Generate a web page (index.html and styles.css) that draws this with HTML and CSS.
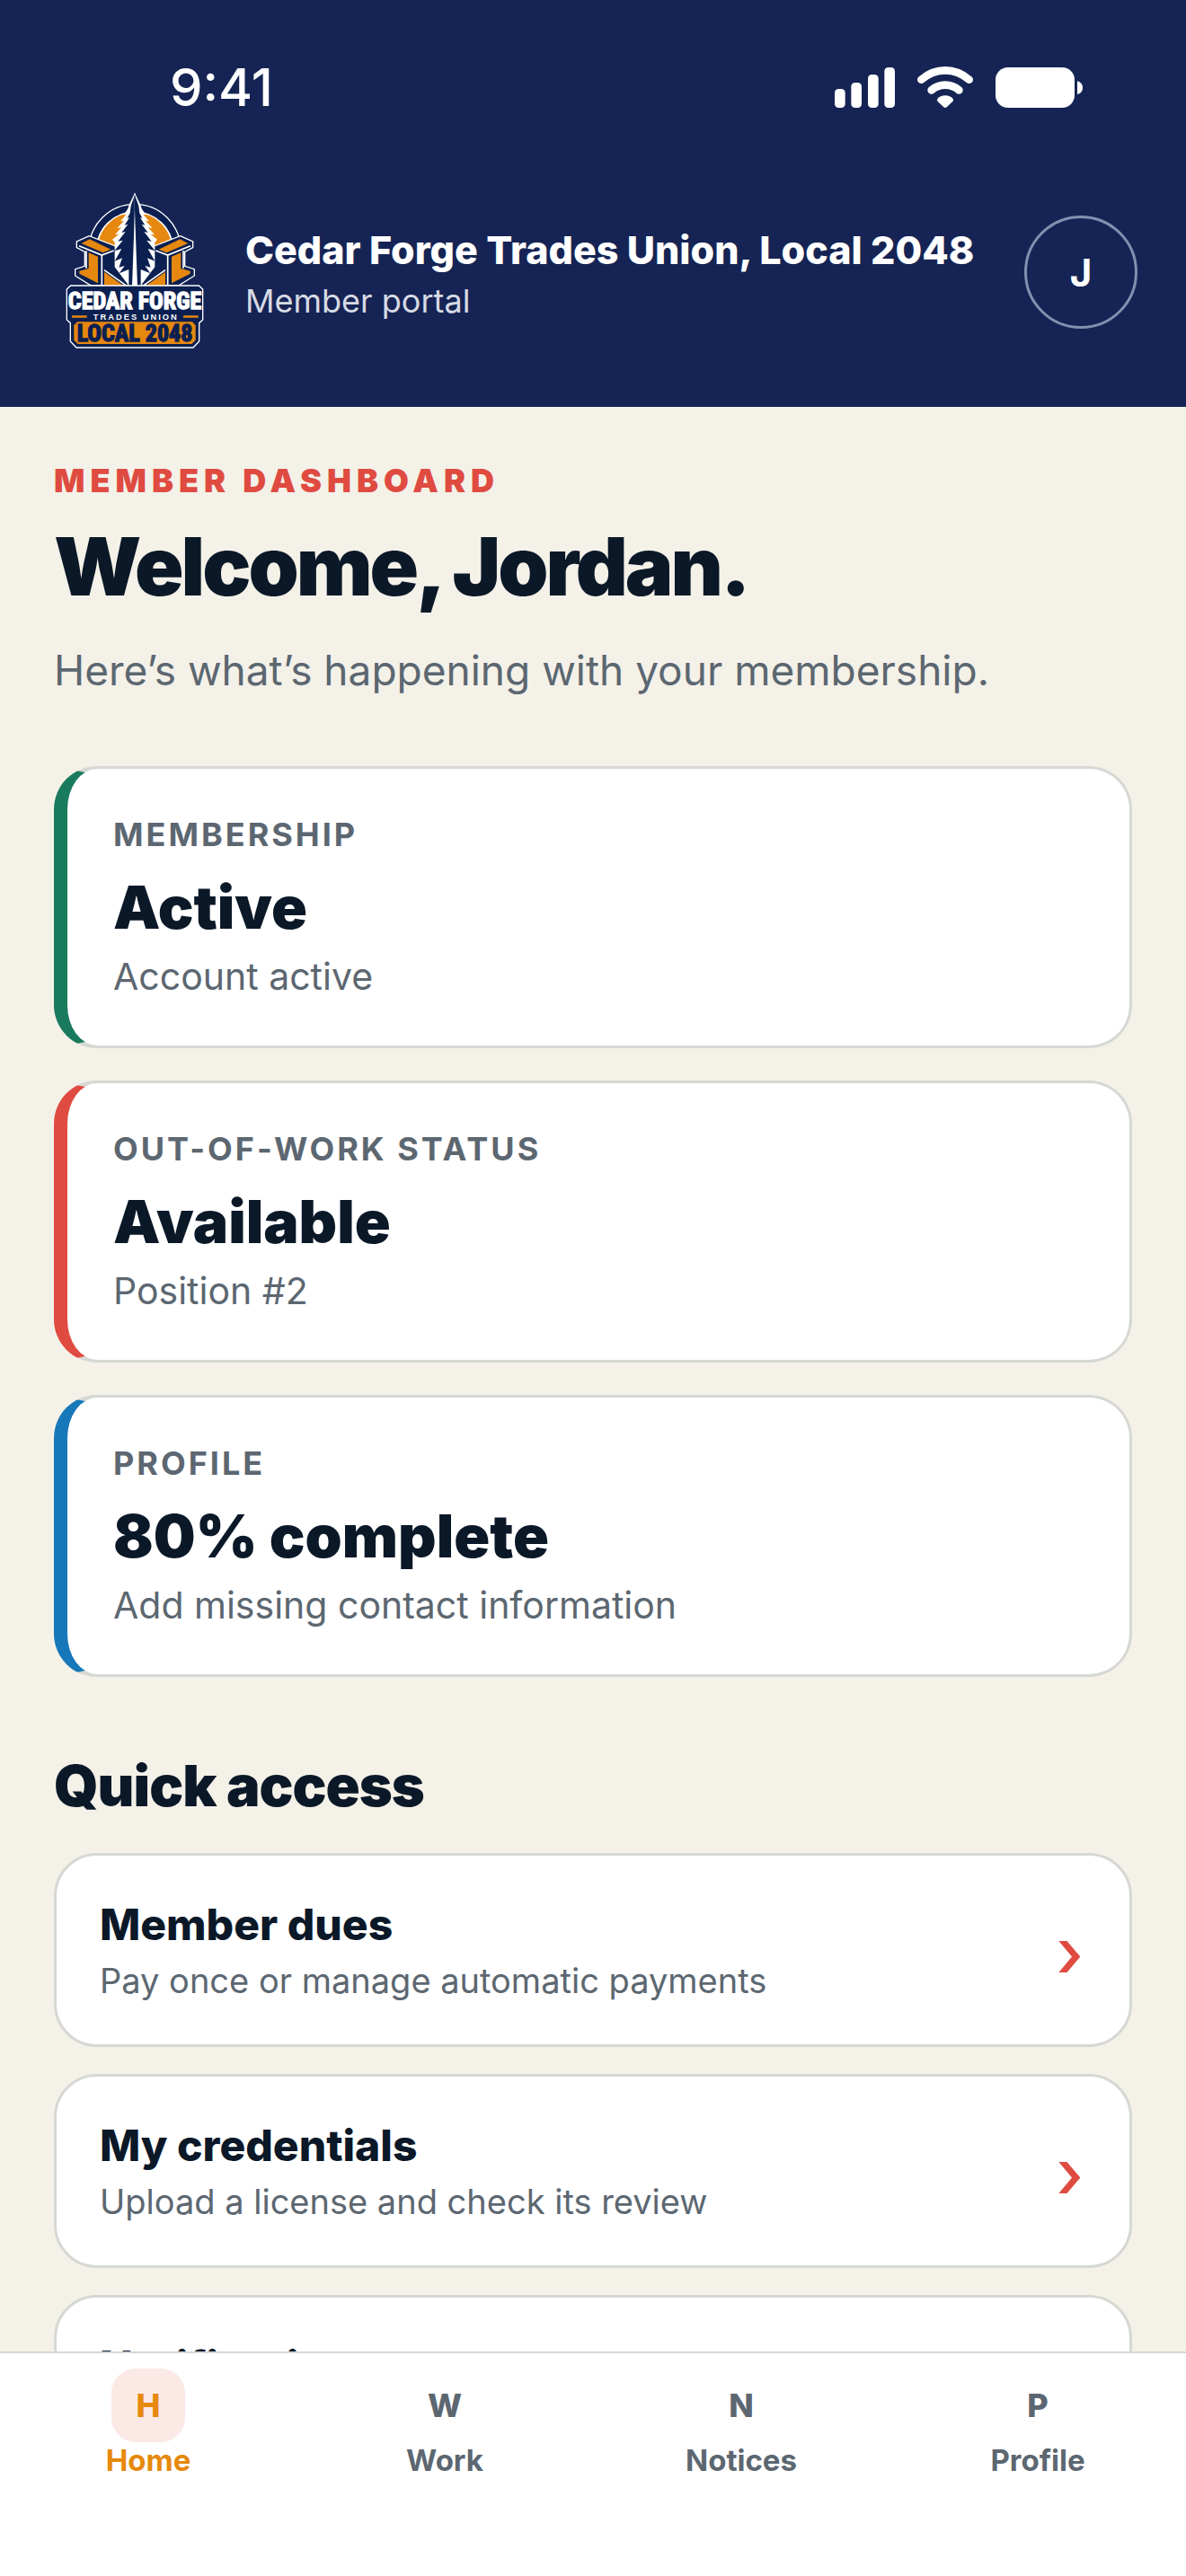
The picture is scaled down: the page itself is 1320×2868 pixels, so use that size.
FILE: index.html
```html
<!DOCTYPE html>
<html lang="en">
<head>
    <meta charset="UTF-8">
    <meta name="viewport" content="width=device-width, initial-scale=1.0">
    <title>Member Dashboard</title>
    <link rel="stylesheet" href="styles.css">
</head>
<body>
    <header class="header">
        <div class="status-bar">
            <span class="status-time">9:41</span>
            <div class="status-icons">
                <svg width="67" height="45" viewBox="0 0 201 135" fill="#fff">
                    <rect x="0" y="72" width="35" height="63" rx="13"/>
                    <rect x="55" y="51" width="35" height="84" rx="13"/>
                    <rect x="111" y="24" width="35" height="111" rx="13"/>
                    <rect x="166" y="0" width="35" height="135" rx="13"/>
                </svg>
                <svg width="62" height="46" viewBox="0 0 186 138" fill="none" stroke="#fff" stroke-width="26" stroke-linecap="round">
                    <path d="M13 44Q49 13 93 13T173 44"/>
                    <path d="M47 79Q67 62 93 62T139 79"/>
                    <path d="M93 97C104 97 113 101 118 107C121 111 120 115 117 118L98 136Q93 140 88 136L69 118C66 115 65 111 68 107C73 101 82 97 93 97Z" fill="#fff" stroke="none"/>
                </svg>
                <svg width="97" height="45" viewBox="0 0 291 135" fill="#fff">
                    <rect width="264" height="135" rx="42"/>
                    <path d="M273 46C285 49 291 58 291 68S285 87 273 90Z"/>
                </svg>
            </div>
        </div>
        <div class="brand-bar">
            <svg class="logo" viewBox="-18 39 540 540" role="img" aria-label="Cedar Forge Trades Union">
                <!-- sun disc -->
                <circle cx="270" cy="235" r="153" fill="#0b2050" stroke="#fff" stroke-width="4"/>
                <circle cx="270" cy="235" r="127" fill="#e6870f" stroke="#fff" stroke-width="5"/>
                <!-- beams, right one is the left one mirrored -->
                <g id="beam">
                    <path d="M118 188L76 207V227L103 241V289L71 299V321L122 353H262V300L205 222Z" fill="#0b2050" stroke="#fff" stroke-width="4"/>
                    <path d="M92 213L119 199L190 233L164 244Z" fill="#e6870f"/>
                    <path d="M84 221L160 252L200 237" fill="none" stroke="#fff" stroke-width="5"/>
                    <path d="M116 244L147 257V346L85 314V305L116 297Z" fill="#e6870f"/>
                    <path d="M108 238V296M160 252V353M168 302L240 353" fill="none" stroke="#fff" stroke-width="5"/>
                    <path d="M168 308L232 354H168Z" fill="#e6870f"/>
                </g>
                <use href="#beam" transform="matrix(-1 0 0 1 540 0)"/>
                <!-- tree, drawn as two mirrored halves -->
                <g id="tree">
                    <path d="M271 44H270L251 84L247 97L233 118L242 116L222 139L234 137L211 162L225 160L204 184L217 182L195 200L203 210V292L250 354H271Z" fill="#fff"/>
                    <path d="M271 51H270L257 88L254 112L245 128L252 127L236 152L247 149L226 177L239 174L214 206L230 203L202 238L226 231L203 272L228 262L217 293L236 288L218 313L250 300V354H271Z" fill="#0b2050"/>
                </g>
                <use href="#tree" transform="matrix(-1 0 0 1 540 0)"/>
                <path d="M270 105L261 358H279Z" fill="#fff"/>
                <!-- name plate -->
                <path d="M56 354H484L497 366V468L485 479V540L465 561H75L55 540V479L43 468V366Z" fill="#0b2050" stroke="#fff" stroke-width="4"/>
                <path d="M60 454H110V461H60ZM432 454H482V461H432Z" fill="#e6870f"/>
                <path d="M78 475H462L473 487V536L460 549H80L67 536V487Z" fill="#e6870f"/>
                <text class="logo-name" x="270" y="432">CEDAR FORGE</text>
                <text class="logo-trade" x="274" y="467">TRADES UNION</text>
                <text class="logo-local" x="270" y="540">LOCAL 2048</text>
            </svg>
            <div class="brand-text">
                <strong class="brand-name">Cedar Forge Trades Union, Local 2048</strong>
                <span class="brand-sub">Member portal</span>
            </div>
            <button class="avatar" type="button" aria-label="Account">J</button>
        </div>
    </header>

    <main class="content">
        <p class="eyebrow">MEMBER DASHBOARD</p>
        <h1>Welcome, Jordan.</h1>
        <p class="intro">Here’s what’s happening with your membership.</p>

        <section class="cards">
            <article class="card card-green">
                <span class="card-label">MEMBERSHIP</span>
                <strong class="card-value">Active</strong>
                <span class="card-note">Account active</span>
            </article>
            <article class="card card-red">
                <span class="card-label">OUT-OF-WORK STATUS</span>
                <strong class="card-value">Available</strong>
                <span class="card-note">Position #2</span>
            </article>
            <article class="card card-blue">
                <span class="card-label">PROFILE</span>
                <strong class="card-value">80% complete</strong>
                <span class="card-note">Add missing contact information</span>
            </article>
        </section>

        <h2>Quick access</h2>
        <nav class="links" aria-label="Quick access">
            <a class="link-row" href="#dues">
                <span class="link-text">
                    <strong>Member dues</strong>
                    <small>Pay once or manage automatic payments</small>
                </span>
                <span class="chevron">›</span>
            </a>
            <a class="link-row" href="#credentials">
                <span class="link-text">
                    <strong>My credentials</strong>
                    <small>Upload a license and check its review</small>
                </span>
                <span class="chevron">›</span>
            </a>
            <a class="link-row" href="#notifications">
                <span class="link-text">
                    <strong>Notifications</strong>
                </span>
            </a>
        </nav>
    </main>

    <nav class="tab-bar" aria-label="Main">
        <a class="tab active" href="#home"><span class="tab-icon">H</span>Home</a>
        <a class="tab" href="#work"><span class="tab-icon">W</span>Work</a>
        <a class="tab" href="#notices"><span class="tab-icon">N</span>Notices</a>
        <a class="tab" href="#profile"><span class="tab-icon">P</span>Profile</a>
    </nav>
</body>
</html>
```

FILE: styles.css
```css
* {
    box-sizing: border-box;
}
body {
    font-family: Inter, 'Liberation Sans', sans-serif;
    background: #f4f1e8;
    color: #0b1828;
    display: flex;
    flex-direction: column;
    height: 100vh;
    margin: 0;
}
h1, h2, p {
    margin: 0;
}
a {
    color: inherit;
    text-decoration: none;
}

/* header */
.header {
    background: #152454;
    color: white;
    flex: none;
}
.status-bar {
    display: flex;
    justify-content: space-between;
    align-items: center;
    height: 194px;
    padding: 0 115px 0 189px;
}
.status-time {
    font-size: 58px;
    font-weight: 500;
}
.status-icons {
    display: flex;
    align-items: center;
    gap: 25px;
}
.brand-bar {
    display: flex;
    align-items: center;
    gap: 39px;
    padding: 19px 54px 60px;
}
.logo {
    width: 180px;
    height: 180px;
    flex: none;
}
.logo text {
    font-family: 'Liberation Sans Narrow', 'Roboto Condensed', 'DejaVu Sans Condensed', sans-serif;
    font-weight: bold;
    text-anchor: middle;
}
.logo .logo-name {
    font-size: 78px;
    fill: white;
    stroke: white;
    stroke-width: 4px;
}
.logo .logo-trade {
    font-family: 'Liberation Sans', sans-serif;
    font-size: 28px;
    letter-spacing: 6px;
    fill: white;
}
.logo .logo-local {
    font-size: 78px;
    fill: #0b2050;
    stroke: #0b2050;
    stroke-width: 4px;
}
.brand-text {
    display: flex;
    flex-direction: column;
    gap: 7px;
    flex: 1;
    min-width: 0;
    white-space: nowrap;
}
.brand-name {
    font-size: 43px;
    font-weight: 800;
    line-height: 56px;
}
.brand-sub {
    font-size: 36px;
    line-height: 44px;
    color: #d7dae4;
}
.avatar {
    width: 126px;
    height: 126px;
    flex: none;
    padding: 0;
    border: 3px solid #8390b0;
    border-radius: 50%;
    background: transparent;
    color: white;
    font-family: inherit;
    font-size: 42px;
    font-weight: 700;
    cursor: pointer;
}

/* content */
.content {
    flex: 1;
    min-height: 0;
    overflow-y: auto;
    scrollbar-width: none;
    padding: 60px 60px 36px;
}
.eyebrow {
    font-size: 36px;
    font-weight: 900;
    line-height: 44px;
    letter-spacing: 6px;
    color: #df4b40;
}
h1 {
    margin-top: 20px;
    font-size: 90px;
    font-weight: 900;
    line-height: 108px;
    letter-spacing: -3px;
}
.intro {
    margin-top: 28px;
    font-size: 46px;
    line-height: 66px;
    color: #5c6771;
}
.cards {
    display: flex;
    flex-direction: column;
    gap: 36px;
    margin-top: 74px;
}
.card {
    display: flex;
    flex-direction: column;
    padding: 51px;
    background: white;
    border: 3px solid #d6d8d3;
    border-left-width: 15px;
    border-radius: 48px;
}
.card-green {
    border-left-color: #1a7a5e;
}
.card-red {
    border-left-color: #df4b40;
}
.card-blue {
    border-left-color: #1678b9;
}
.card-label {
    font-size: 36px;
    font-weight: 700;
    line-height: 44px;
    letter-spacing: 3px;
    color: #5c6771;
}
.card-value {
    margin-top: 20px;
    font-size: 66px;
    font-weight: 900;
    line-height: 78px;
}
.card-note {
    margin-top: 12px;
    font-size: 41px;
    line-height: 52px;
    color: #5c6771;
}
h2 {
    margin-top: 82px;
    font-size: 63px;
    font-weight: 900;
    line-height: 78px;
    letter-spacing: -1px;
}
.links {
    display: flex;
    flex-direction: column;
    gap: 30px;
    margin-top: 36px;
}
.link-row {
    display: flex;
    align-items: center;
    justify-content: space-between;
    padding: 48px 51px 45px 48px;
    background: white;
    border: 3px solid #d6d8d3;
    border-radius: 48px;
}
.link-text {
    display: flex;
    flex-direction: column;
    gap: 7px;
}
.link-text strong {
    font-size: 48px;
    font-weight: 800;
    line-height: 58px;
}
.link-text small {
    font-size: 38px;
    line-height: 52px;
    color: #5c6771;
}
.chevron {
    font-size: 76px;
    font-weight: 500;
    line-height: 78px;
    color: #df4b40;
}

/* bottom tabs */
.tab-bar {
    display: flex;
    flex: none;
    padding: 17px 0 109px;
    background: white;
    border-top: 2px solid #d6d8d3;
}
.tab {
    display: flex;
    flex: 1;
    flex-direction: column;
    align-items: center;
    font-size: 33px;
    font-weight: 700;
    line-height: 40px;
    color: #5c6771;
}
.tab-icon {
    display: flex;
    align-items: center;
    justify-content: center;
    width: 82px;
    height: 82px;
    border-radius: 27px;
    font-size: 36px;
    font-weight: 800;
}
.tab.active {
    color: #e6890c;
}
.tab.active .tab-icon {
    background: #fbe9e6;
}
```
